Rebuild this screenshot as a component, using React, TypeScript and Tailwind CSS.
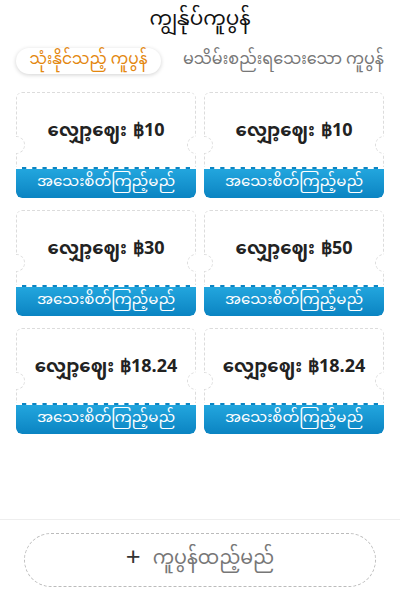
import React from 'react';

interface Coupon {
  id: number;
  price: string;
}

const coupons: Coupon[] = [
  { id: 1, price: '฿10' },
  { id: 2, price: '฿10' },
  { id: 3, price: '฿30' },
  { id: 4, price: '฿50' },
  { id: 5, price: '฿18.24' },
  { id: 6, price: '฿18.24' },
];

function Ticket({ coupon }: { coupon: Coupon }) {
  return (
    <div className="relative h-[106px] overflow-hidden rounded-[6px]">
      <div className="flex h-full flex-col rounded-[6px] border border-dashed border-[#dcdcdc]">
        <div className="flex flex-1 items-center justify-center gap-[6px] pt-[3px] text-[18px] font-bold text-[#222]">
          <span>လျှော့ဈေး</span>
          <span>{coupon.price}</span>
        </div>
        <div className="-mx-px -mb-px flex h-[31px] items-center justify-center rounded-b-[6px] border-t-2 border-dashed border-white bg-gradient-to-b from-[#22a6de] to-[#0a84c2] text-[15px] text-white">
          အသေးစိတ်ကြည့်မည်
        </div>
      </div>
      {/* side notches */}
      <div className="absolute top-[44px] -left-[9px] h-[18px] w-[18px] rounded-full border border-dashed border-[#dcdcdc] bg-white" />
      <div className="absolute top-[44px] -right-[9px] h-[18px] w-[18px] rounded-full border border-dashed border-[#dcdcdc] bg-white" />
    </div>
  );
}

export default function App() {
  return (
    <div
      className="flex h-[600px] w-[400px] flex-col bg-white"
      style={{ fontFamily: '"Noto Sans Myanmar", "Padauk", "Noto Sans", sans-serif' }}
    >
      <header className="flex justify-center pt-[2px] text-[20px] leading-[38px] text-[#111]">
        <h1 className="leading-[38px]">ကျွန်ုပ်ကူပွန်</h1>
      </header>

      <div className="mt-[8px] flex items-center px-4">
        <div className="flex h-[26px] w-[148px] items-center justify-center rounded-full bg-white text-[15.5px] text-[#e3870e] shadow-[0_1px_4px_rgba(0,0,0,0.18)]">
          သုံးနိုင်သည့် ကူပွန်
        </div>
        <div className="ml-[22px] whitespace-nowrap text-[16px] text-[#777]">မသိမ်းစည်းရသေးသော ကူပွန်</div>
      </div>

      <main className="mt-[18px] grid grid-cols-2 gap-x-2 gap-y-3 px-4">
        {coupons.map(c => (
          <Ticket key={c.id} coupon={c} />
        ))}
      </main>

      <div className="flex-1" />

      <footer className="flex h-[81px] items-center justify-center border-t border-[#eeeeee] px-6">
        <button className="flex h-[54px] w-full items-center justify-center gap-3 rounded-full border border-dashed border-[#bbbbbb] text-[19px] text-[#777]">
          <span className="text-[26px] leading-none text-[#333]">+</span>
          ကူပွန်ထည့်မည်
        </button>
      </footer>
    </div>
  );
}
